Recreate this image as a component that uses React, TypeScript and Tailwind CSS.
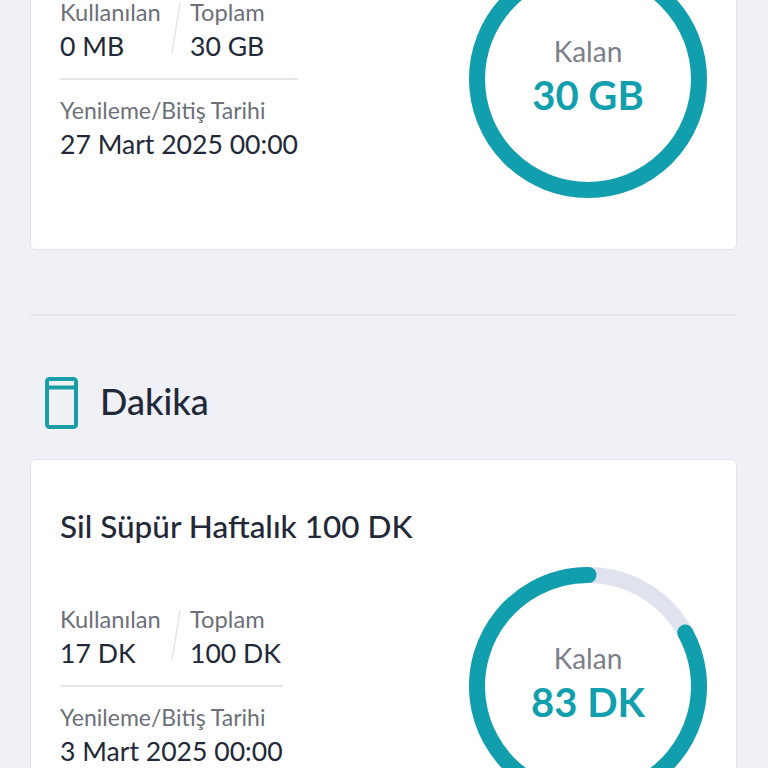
import React from "react";

const TEAL = "#129fad";

function Ring({ percent, value }: { percent: number; value: string }) {
  const r = 111;
  const c = 2 * Math.PI * r;
  const used = 100 - percent;
  return (
    <div className="relative w-[238px] h-[238px] shrink-0">
      <svg width="238" height="238" viewBox="0 0 238 238">
        <circle cx="119" cy="119" r={r} fill="none" stroke="#e0e3ee" strokeWidth="16" />
        <circle
          cx="119"
          cy="119"
          r={r}
          fill="none"
          stroke={TEAL}
          strokeWidth="16"
          strokeLinecap={percent === 100 ? "butt" : "round"}
          strokeDasharray={`${(c * percent) / 100} ${c}`}
          transform={`rotate(${-90 + (used * 360) / 100} 119 119)`}
        />
      </svg>
      <div className="absolute inset-0 flex flex-col items-center pt-[75px]">
        <span className="text-[28px] leading-[32px] text-[#7b7e88]">Kalan</span>
        <span className="text-[40px] leading-[50px] mt-[3px] font-bold text-[#129fad]">{value}</span>
      </div>
    </div>
  );
}

function Stat({ label, value, small }: { label: string; value: string; small?: boolean }) {
  return (
    <div className="flex flex-col">
      <span className={`${small ? "text-[23px]" : "text-[23.7px]"} leading-[30px] text-[#6d7079] whitespace-nowrap`}>
        {label}
      </span>
      <span className="text-[26.6px] leading-[38px] text-[#232838] whitespace-nowrap">{value}</span>
    </div>
  );
}

function PackageCard(props: {
  title: string;
  used: string;
  total: string;
  date: string;
  percent: number;
  left: string;
}) {
  return (
    <div className="flex justify-between h-[398px] bg-white border border-[#e2e4ec] rounded-md pl-[29px] pr-[29px]">
      <div className="pt-[46px]">
        <div className="text-[31.5px] leading-[40px] font-medium text-[#232838] whitespace-nowrap">{props.title}</div>
        <div className="inline-flex flex-col mt-[58px]">
          <div className="flex">
            <div className="w-[111px]">
              <Stat label="Kullanılan" value={props.used} />
            </div>
            <svg width="19" height="56" viewBox="0 0 19 56" className="mt-[4px] shrink-0">
              <path d="M9 2 L1 52" stroke="#e4e6ec" strokeWidth="1.5" />
            </svg>
            <Stat label="Toplam" value={props.total} />
          </div>
          <div className="h-[2px] bg-[#e5e6ea] mt-[13px]" />
          <div className="mt-[15px]">
            <Stat small label="Yenileme/Bitiş Tarihi" value={props.date} />
          </div>
        </div>
      </div>
      <div className="pt-[107px]">
        <Ring percent={props.percent} value={props.left} />
      </div>
    </div>
  );
}

export default function App() {
  return (
    <div
      className="h-[768px] overflow-hidden bg-[#eff1f6]"
      style={{ fontFamily: '"Lato", "Noto Sans", sans-serif' }}
    >
      <div className="-mt-[148px] pl-[30px] pr-[31px]">
        <PackageCard
          title="Sil Süpür Aylık 30 GB"
          used="0 MB"
          total="30 GB"
          date="27 Mart 2025 00:00"
          percent={100}
          left="30 GB"
        />
        <div className="h-[2px] bg-[#e4e6ec] mt-[64px]" />
        <div className="flex items-center h-[51px] mt-[61px] pl-[15px]">
          <svg width="33" height="52" viewBox="0 0 33 52" fill="none" stroke="#1a9ea5" strokeWidth="4">
            <rect x="2" y="2" width="29" height="48" rx="2.5" />
            <path d="M2 10.5 H31" />
          </svg>
          <span className="ml-[22px] -mt-[3px] text-[36px] leading-[44px] font-medium text-[#232838]">Dakika</span>
        </div>
        <div className="mt-[31px]">
          <PackageCard
            title="Sil Süpür Haftalık 100 DK"
            used="17 DK"
            total="100 DK"
            date="3 Mart 2025 00:00"
            percent={83}
            left="83 DK"
          />
        </div>
      </div>
    </div>
  );
}
